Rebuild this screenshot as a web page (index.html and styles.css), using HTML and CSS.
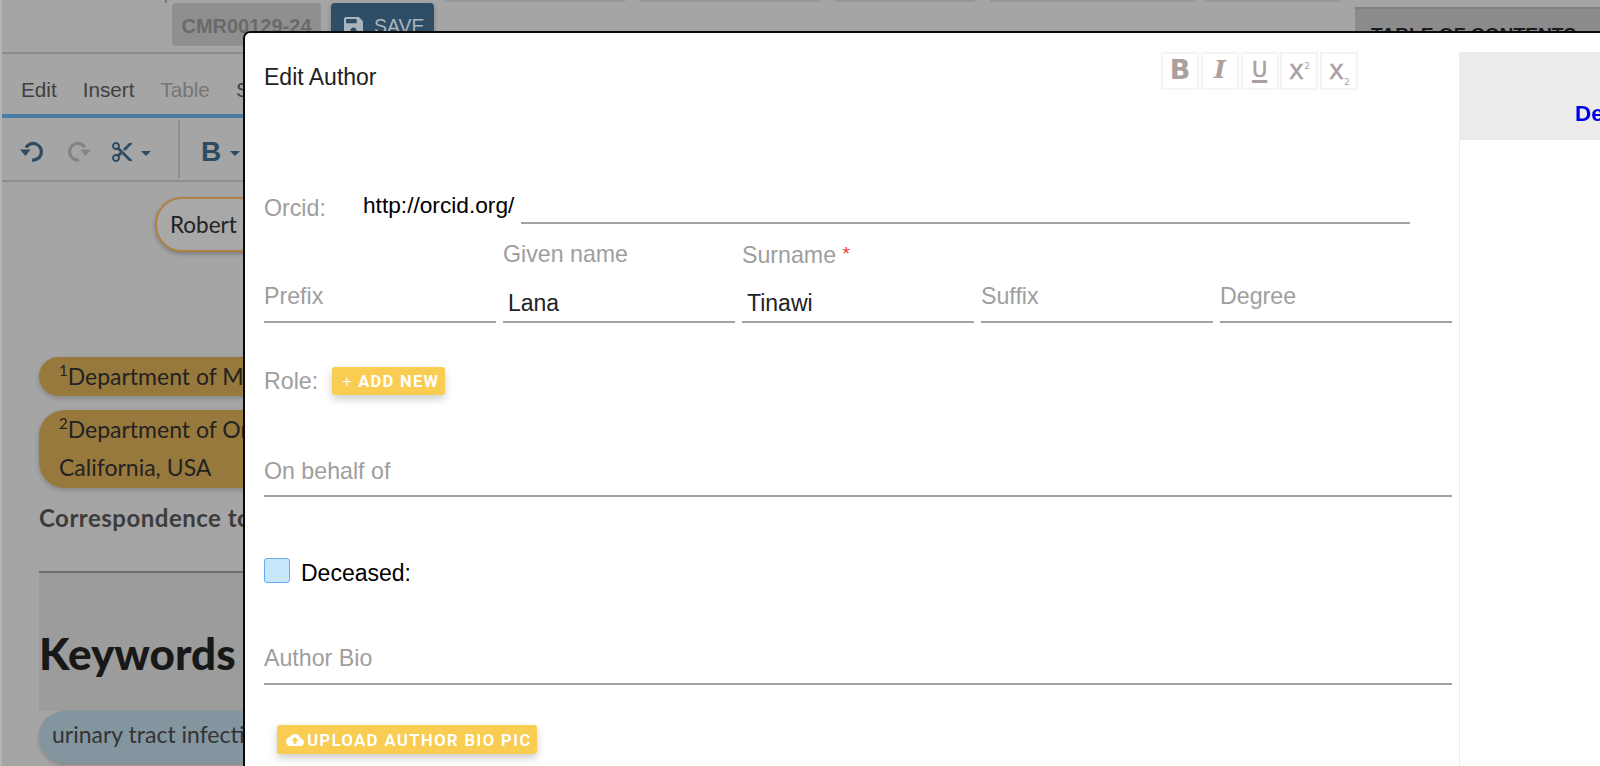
FILE: index.html
```html
<!DOCTYPE html>
<html lang="en">
<head>
<meta charset="utf-8">
<title>Edit Author</title>
<link rel="stylesheet" href="styles.css">
</head>
<body>
<div class="app">
  <header class="topbar">
    <div class="tabs"><i class="t0"></i><i class="t1"></i><i class="t2"></i><i class="t3"></i><i class="t4"></i><i class="t5"></i></div>
    <span class="code">CMR00129-24</span>
    <span class="save">
      <svg class="save-ic" viewBox="3 3 18 18"><path d="M17 3H5c-1.11 0-2 .9-2 2v14c0 1.1.89 2 2 2h14c1.100 0 2-.9 2-2V7l-4-4zm-5 16c-1.660 0-3-1.340-3-3s1.340-3 3-3 3 1.340 3 3-1.340 3-3 3zm3-10H5V5h10v4z"/></svg>
      SAVE
    </span>
    <div class="toc">TABLE OF CONTENTS</div>
  </header>
  <nav class="menu"><span>Edit</span><span>Insert</span><span class="off">Table</span><span>Styles</span></nav>
  <div class="tools">
    <svg class="ic" viewBox="0 0 24 24"><path class="st" d="M6 7.500A8.300 8.300 0 1 1 12 20"/><path class="fl" d="M0 9.500h10.500L5.500 16z"/></svg>
    <svg class="ic redo" viewBox="0 0 24 24"><path class="st" d="M18 7.500A8.300 8.300 0 1 0 12 20"/><path class="fl" d="M24 9.500H13.500L18.500 16z"/></svg>
    <svg class="ic cut" viewBox="0 0 24 24"><path class="fl" d="M9.640 7.640c.23-.5.36-1.050.36-1.640 0-2.210-1.790-4-4-4S2 3.790 2 6s1.790 4 4 4c.59 0 1.140-.13 1.640-.36L10 12l-2.360 2.360C7.140 14.130 6.590 14 6 14c-2.210 0-4 1.790-4 4s1.790 4 4 4 4-1.790 4-4c0-.59-.13-1.140-.36-1.640L12 14l7 7h3v-1L9.640 7.640zM6 8c-1.100 0-2-.89-2-2s.9-2 2-2 2 .89 2 2-.9 2-2 2zm0 12c-1.100 0-2-.89-2-2s.9-2 2-2 2 .89 2 2-.9 2-2 2zm6-7.500c-.28 0-.5-.22-.5-.5s.22-.5.5-.5.5.22.5.5-.22.5-.5.5zM19 3l-6 6 2 2 7-7V3z"/></svg>
    <i class="caret"></i>
    <i class="sep"></i>
    <b class="tool-b">B</b>
    <i class="caret"></i>
  </div>
  <main class="doc">
    <div class="author-row"><span class="author-pill">Robert Smith</span></div>
    <p class="aff aff-1"><sup>1</sup>Department of Medicine</p>
    <p class="aff aff-2"><sup>2</sup>Department of Orthopedics<br>California, USA</p>
    <p class="corr">Correspondence to</p>
    <div class="kw-block"><h2>Keywords</h2></div>
    <div class="kw-pill">urinary tract infection</div>
  </main>
</div>

<section class="modal">
  <div class="form">
    <div class="head">
      <h1>Edit Author</h1>
      <div class="fmt">
        <span class="fb">B</span><span class="fi">I</span><span class="fu">U</span><span class="fs">x<sup>2</sup></span><span class="fs">x<sub>2</sub></span>
      </div>
    </div>
    <div class="orcid">
      <span class="lab orcid-lab">Orcid:</span>
      <span class="orcid-url">http://orcid.org/</span>
      <span class="orcid-line"></span>
    </div>
    <div class="names">
      <div class="fld"><span class="lab">Prefix</span></div>
      <div class="fld filled"><span class="lab top">Given name</span><span class="val">Lana</span></div>
      <div class="fld filled"><span class="lab top">Surname <em>*</em></span><span class="val">Tinawi</span></div>
      <div class="fld"><span class="lab">Suffix</span></div>
      <div class="fld"><span class="lab">Degree</span></div>
    </div>
    <div class="role">
      <span class="lab">Role:</span>
      <span class="btn add"><span class="plus">+</span> ADD NEW</span>
    </div>
    <div class="wide behalf"><span class="lab">On behalf of</span></div>
    <label class="deceased"><i class="check"></i><span>Deceased:</span></label>
    <div class="wide bio"><span class="lab">Author Bio</span></div>
    <span class="btn upload">
      <svg class="cloud" viewBox="0 0 24 24"><path d="M19.350 10.040C18.670 6.590 15.640 4 12 4 9.110 4 6.600 5.640 5.350 8.040 2.340 8.360 0 10.910 0 14c0 3.310 2.690 6 6 6h13c2.760 0 5-2.240 5-5 0-2.640-2.050-4.780-4.650-4.960zM14 13v4h-4v-4H7l5-5 5 5h-3z"/></svg>
      UPLOAD AUTHOR BIO PIC
    </span>
  </div>
  <aside class="side">
    <div class="side-head">De</div>
  </aside>
</section>
</body>
</html>
```

FILE: styles.css
```css
* { box-sizing: border-box; }
html, body { margin: 0; height: 100%; overflow: hidden; }
body { background: #a5a5a5; font-family: "Liberation Sans", Arial, sans-serif; }

.app { height: 766px; border-left: 2px solid #b4b4b4; overflow: hidden; }

/* ---------- dimmed page behind the dialog ---------- */
.topbar { position: relative; display: flex; align-items: flex-start; height: 54px; padding: 3px 0 0 170px; border-bottom: 2px solid #8c8c8c; }
.tabs { position: absolute; inset: 0 0 auto 0; height: 3px; }
.tabs i { position: absolute; top: 0; height: 2px; background: #979797; }
.tabs .t0 { left: 163px; width: 2px; height: 3px; background: #777; }
.t1 { left: 443px; width: 180px; }
.t2 { left: 638px; width: 180px; }
.t3 { left: 833px; width: 140px; }
.t4 { left: 988px; width: 205px; }
.t5 { left: 1203px; width: 135px; }
.code { width: 149px; height: 43px; border-radius: 4px; background: #8f8f8f; color: #6a6a6a; font-weight: 700; font-size: 20px; line-height: 46px; text-align: center; }
.save { display: flex; gap: 10px; align-items: center; width: 103px; height: 43px; margin-left: 10px; padding: 3px 0 0 12px; border-radius: 4px; background: #2e4e67; color: #aab4bc; font-size: 19.500px; box-shadow: 0 2px 4px rgba(0,0,0,.25); }
.save-ic { width: 21px; height: 19px; fill: #aab4bc; }
.toc { width: 245px; height: 60px; margin: 4px 0 0 auto; padding: 15px 0 0 16px; background: #8b8b8b; border-top: 2px solid #808080; color: #1c1c1c; font-weight: 700; font-size: 19.200px; }

.menu { display: flex; gap: 26px; height: 64px; padding: 24px 0 0 19px; border-bottom: 4px solid #4a7da6; color: #404040; font-size: 20.700px; line-height: 24px; }
.menu .off { color: #767676; }

.tools { display: flex; align-items: center; height: 64px; padding: 5px 0 0 18px; border-bottom: 2px solid #8e8e8e; }
.ic { width: 24px; height: 24px; }
.st { fill: none; stroke: #2d4c64; stroke-width: 3.200; }
.fl { fill: #2d4c64; }
.redo { margin-left: 23px; }
.redo .st { stroke: #848484; }
.redo .fl { fill: #848484; }
.cut { margin-left: 19px; }
.caret { width: 0; height: 0; margin: 3px 0 0 7px; border: 5.500px solid transparent; border-top-color: #2d4c64; border-bottom: 0; }
.sep { width: 2px; height: 58px; margin: -5px 21px 0 27px; background: #8e8e8e; }
.tool-b { width: 22px; color: #2d4c64; font-size: 28px; line-height: 28px; }

.doc { padding-left: 37px; color: #222; font-family: Lato, sans-serif; font-size: 23px; white-space: nowrap; }
.author-row { height: 70px; padding: 15px 0 0 116px; }
.author-pill { display: block; width: 300px; height: 55px; padding-left: 13px; border: 2.500px solid #b08140; border-radius: 27px; background: #a8a8a8; font-size: 22.500px; line-height: 52px; box-shadow: 0 2px 4px rgba(0,0,0,.25); }
.aff { width: 340px; margin: 0; background: #98793d; box-shadow: 0 2px 5px rgba(0,0,0,.2); }
.aff sup { font-size: 15px; line-height: 0; }
.aff-1 { height: 39px; margin-top: 105px; padding-left: 20px; border-radius: 20px; line-height: 38px; }
.aff-2 { height: 78px; margin-top: 14px; padding-left: 20px; border-radius: 26px; line-height: 38px; }
.corr { height: 85px; margin: 0; padding-top: 16px; border-bottom: 2px solid #6e6e6e; color: #3c3c3c; font-size: 24px; font-weight: 700; letter-spacing: .5px; line-height: 28px; }
.kw-block { height: 138px; background: #9c9c9c; }
.kw-block h2 { margin: 0; padding-top: 57px; color: #181818; font-size: 44px; font-weight: 900; line-height: 46px; }
.kw-pill { width: 340px; height: 52px; padding-left: 13px; border-radius: 26px; background: #83959f; line-height: 47px; box-shadow: 0 2px 4px rgba(0,0,0,.2); color: #333; }

/* ---------- dialog ---------- */
.modal { position: fixed; left: 243px; top: 31px; width: 1400px; height: 800px; display: flex; background: #fff; border: 2px solid #0a0a0a; border-radius: 7px; color: #000; }
.form { width: 1214px; padding: 0 7px 0 19px; flex: none; }
.head { display: flex; height: 154px; }
.head h1 { width: 897px; flex: none; margin: 0; padding-top: 30px; color: #222; font-size: 23px; font-weight: 400; line-height: 28px; }
.fmt { display: flex; gap: 1.800px; height: 38px; margin-top: 19px; }
.fmt span { width: 38px; height: 38px; border: 2px solid #f4f4f4; color: #ab9f9f; font-family: "DejaVu Sans", sans-serif; text-align: center; line-height: 32px; }
.fmt .fb { font-size: 27px; font-weight: 700; }
.fmt .fi { font-family: "DejaVu Serif", serif; font-size: 25px; font-style: italic; font-weight: 700; }
.fu { font-size: 21px; -webkit-text-stroke: .5px #ab9f9f; text-decoration: underline; text-underline-offset: 3px; text-decoration-thickness: 2.500px; }
.fs { font-size: 26px; -webkit-text-stroke: .3px #ab9f9f; }
.fs sup, .fs sub { font-size: 9px; line-height: 0; -webkit-text-stroke: 0; }

.lab { color: #9e9e9e; font-size: 23.200px; line-height: 28px; }
.orcid { display: flex; align-items: flex-start; height: 67px; }
.orcid-lab { width: 99px; padding-top: 7px; }
.orcid-url { width: 158px; padding-top: 4px; font-size: 22.700px; line-height: 28px; }
.orcid-line { width: 889px; height: 2px; margin-top: 35px; background: #a3a3a3; }

.names { display: grid; grid-template-columns: repeat(5, 232px); gap: 7px; height: 72px; }
.fld { border-bottom: 2px solid #a3a3a3; height: 72px; padding-top: 31px; margin-top: -3px; }
.fld.filled { padding-top: 0; }
.top { display: block; height: 42px; margin-top: -11px; }
.val { display: block; margin-top: 6px; padding-left: 5px; color: #222; font-size: 23px; line-height: 30px; }
.fld em { color: #f03a2e; font-style: normal; font-size: 19px; vertical-align: 3px; }

.role { display: flex; align-items: center; gap: 14px; height: 28px; margin-top: 41px; }
.btn { display: inline-flex; align-items: center; border-radius: 3px; background: #f9cc52; color: #fff; font-family: Roboto, sans-serif; font-weight: 700; letter-spacing: 1.300px; box-shadow: 0 4px 8px rgba(0,0,0,.2); }
.add { height: 28px; padding: 0 6px 0 10px; font-size: 16.500px; white-space: pre; }
.plus { font-weight: 300; }
.wide { height: 48px; border-bottom: 2px solid #a3a3a3; }
.behalf { margin-top: 54px; }
.deceased { display: flex; align-items: center; gap: 11px; height: 25px; margin-top: 61px; font-size: 23px; }
.check { width: 26px; height: 25px; border: 1.500px solid #62aeee; border-radius: 3px; background: #c8e7fc; }
.deceased span { margin-top: 6px; }
.bio { margin-top: 52px; height: 50px; }
.wide .lab { display: block; padding-top: 8px; }
.bio .lab { padding-top: 9px; }
.upload { gap: 3px; height: 29px; margin: 40px 0 0 13px; padding: 0 6px 0 9px; font-size: 16.800px; }
.cloud { width: 18px; height: 18px; fill: #fff; }

.side { flex: 1; border-left: 1px solid #ececec; margin-top: 19px; }
.side-head { height: 88px; margin-left: -1px; padding: 48px 0 0 116px; background: #ececec; color: #0000ee; font-size: 22.500px; font-weight: 700; line-height: 28px; }
```
